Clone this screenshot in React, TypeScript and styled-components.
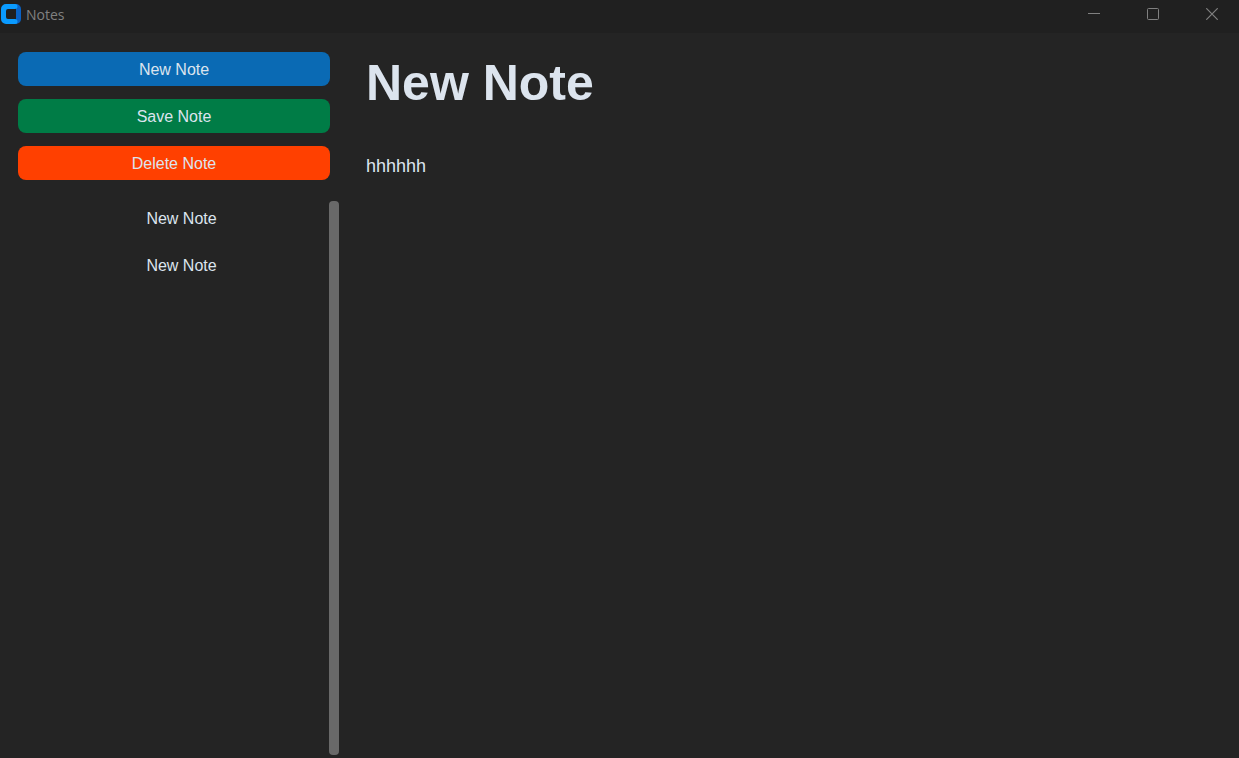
import React, { useState } from "react";
import styled, { createGlobalStyle } from "styled-components";

const GlobalStyle = createGlobalStyle`
  *, *::before, *::after { box-sizing: border-box; }
  html, body { margin: 0; background: #242424; }
  button, input, textarea { font: inherit; border: 0; outline: 0; margin: 0; }
`;

const Window = styled.div`
  display: flex;
  flex-direction: column;
  min-height: 100vh;
  background: #242424;
  color: #dce4ee;
  font: 16px/20px "Liberation Sans", Arial, sans-serif;
`;

const TitleBar = styled.header`
  display: flex;
  align-items: flex-start;
  height: 33px;
  background: #202020;
  color: #808080;
`;

const Brand = styled.div`
  display: flex;
  align-items: center;
  gap: 5px;
  height: 28px;
  padding-left: 1px;
  font: 14px/20px "Open Sans", "Noto Sans", sans-serif;
`;

const BrandName = styled.span`
  padding-top: 2px;
`;

const AppIcon = styled.svg`
  display: block;
  width: 20px;
  height: 20px;
`;

const WindowControls = styled.div`
  display: flex;
  margin-left: auto;
`;

const ControlButton = styled.button`
  display: grid;
  place-items: center;
  width: 59px;
  height: 28px;
  padding: 0 0 0 5px;
  background: transparent;
  color: inherit;

  svg {
    display: block;
    fill: none;
    stroke: currentColor;
  }
`;

const Body = styled.div`
  flex: 1;
  display: grid;
  grid-template-columns: 348px 1fr;
`;

const Sidebar = styled.aside`
  display: flex;
  flex-direction: column;
  gap: 21px;
  padding: 19px 9px 3px 18px;
`;

const Actions = styled.div`
  display: flex;
  flex-direction: column;
  gap: 13px;
  padding-right: 9px;
`;

const SidebarButton = styled.button<{ $color?: string }>`
  height: 34px;
  padding: 2px 8px 0;
  border-radius: 8px;
  background: ${({ $color }) => $color ?? "transparent"};
  color: #dce4ee;
`;

const ListArea = styled.div`
  flex: 1;
  display: flex;
`;

const NoteList = styled.nav`
  flex: 1;
  display: flex;
  flex-direction: column;
  gap: 13px;
  padding-left: 16px;
`;

const ScrollTrack = styled.div`
  display: flex;
  width: 10px;
`;

const ScrollThumb = styled.div`
  flex: 1;
  border-radius: 4px;
  background: #696969;
`;

const Editor = styled.main`
  display: flex;
  flex-direction: column;
  gap: 42px;
  padding: 21px 18px;
`;

const TitleField = styled.input`
  width: 100%;
  height: 58px;
  padding: 0;
  background: transparent;
  color: #dce4ee;
  && { font-size: 50px; line-height: 58px; font-weight: 700; }
`;

const TextField = styled.textarea`
  flex: 1;
  width: 100%;
  padding: 0;
  resize: none;
  background: transparent;
  color: #dce4ee;
  && { font: 18px/24px "Liberation Sans", Arial, sans-serif; }
`;

const actions = [
  { label: "New Note", color: "#0a6ab4" },
  { label: "Save Note", color: "#007c46" },
  { label: "Delete Note", color: "#ff4000" },
];

const notes = ["New Note", "New Note"];

export default function App() {
  const [title, setTitle] = useState("New Note");
  const [text, setText] = useState("hhhhhh");

  return (
    <Window>
      <GlobalStyle />
      <TitleBar>
        <Brand>
          <AppIcon viewBox="0 0 20 20" aria-hidden="true">
            <path d="M13 0h2a5 5 0 0 1 5 5v10a5 5 0 0 1-5 5h-2l2-5V5z" fill="#0a62c4" />
            <path
              d="M5 0h9a2.5 2.5 0 0 1 0 5H7a2 2 0 0 0-2 2v6a2 2 0 0 0 2 2h7a2.5 2.5 0 0 1 0 5H5a5 5 0 0 1-5-5V5a5 5 0 0 1 5-5z"
              fill="#0a9bff"
            />
          </AppIcon>
          <BrandName>Notes</BrandName>
        </Brand>
        <WindowControls>
          <ControlButton aria-label="Minimize">
            <svg width="12" height="12" viewBox="0 0 12 12"><path d="M0 5.5h12" /></svg>
          </ControlButton>
          <ControlButton aria-label="Maximize">
            <svg width="12" height="12" viewBox="0 0 12 12"><rect x=".5" y=".5" width="11" height="11" rx="1" /></svg>
          </ControlButton>
          <ControlButton aria-label="Close">
            <svg width="12" height="12" viewBox="0 0 12 12"><path d="M.3.3l11.4 11.4M11.7.3L.3 11.7" strokeWidth="1.2" /></svg>
          </ControlButton>
        </WindowControls>
      </TitleBar>
      <Body>
        <Sidebar>
          <Actions>
            {actions.map((action) => (
              <SidebarButton key={action.label} $color={action.color}>
                {action.label}
              </SidebarButton>
            ))}
          </Actions>
          <ListArea>
            <NoteList aria-label="Notes">
              {notes.map((note, index) => (
                <SidebarButton key={index}>{note}</SidebarButton>
              ))}
            </NoteList>
            <ScrollTrack>
              <ScrollThumb />
            </ScrollTrack>
          </ListArea>
        </Sidebar>
        <Editor>
          <TitleField aria-label="Note title" value={title} onChange={(e) => setTitle(e.target.value)} />
          <TextField aria-label="Note text" value={text} onChange={(e) => setText(e.target.value)} />
        </Editor>
      </Body>
    </Window>
  );
}
